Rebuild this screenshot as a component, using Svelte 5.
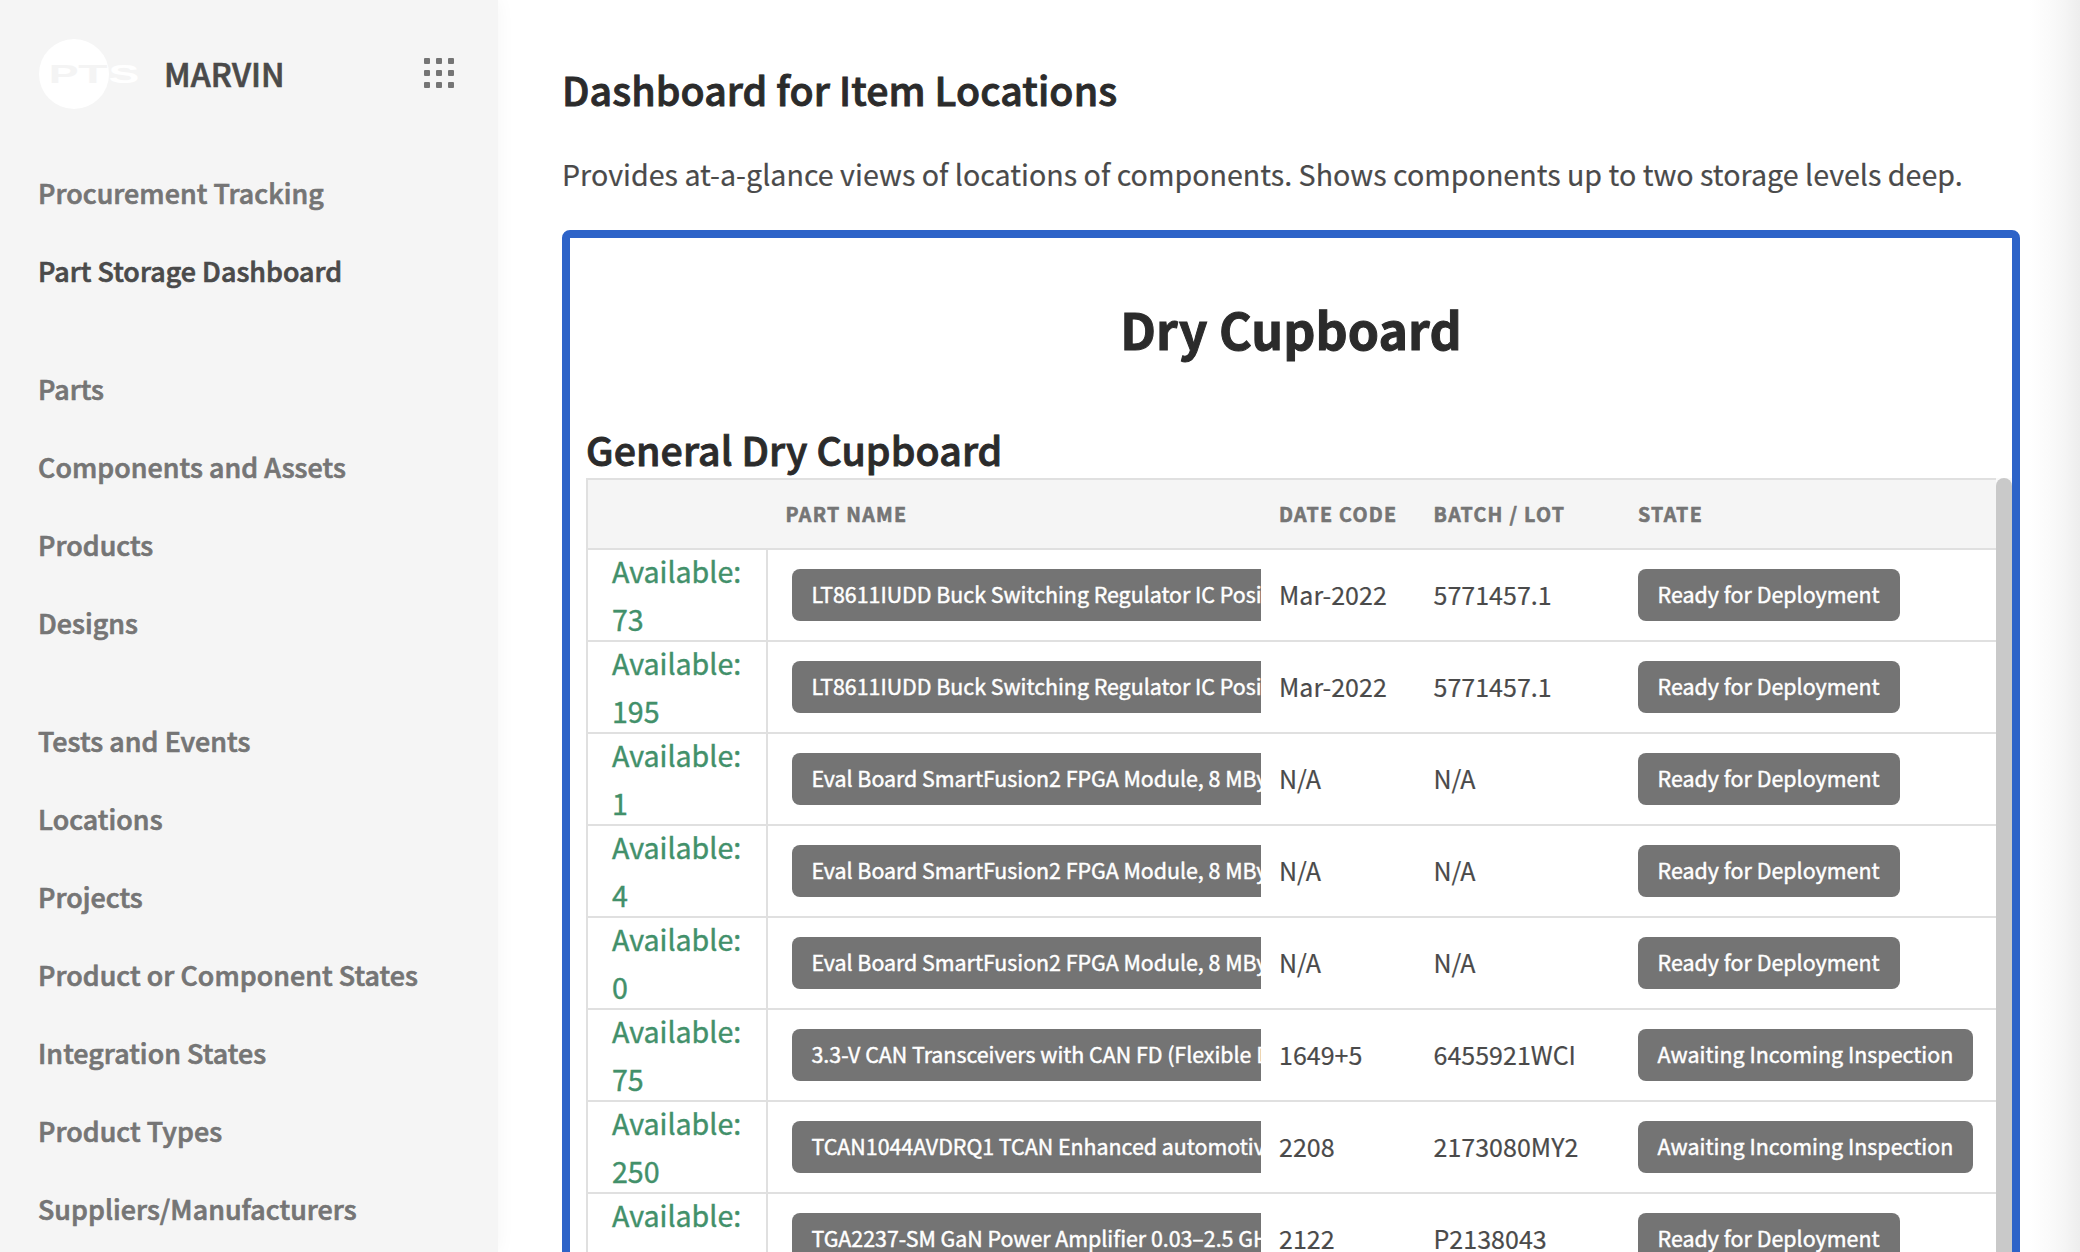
<script>
  const groups = [
    ['Procurement Tracking', 'Part Storage Dashboard'],
    ['Parts', 'Components and Assets', 'Products', 'Designs'],
    [
      'Tests and Events',
      'Locations',
      'Projects',
      'Product or Component States',
      'Integration States',
      'Product Types',
      'Suppliers/Manufacturers'
    ]
  ];
  const active = 'Part Storage Dashboard';

  const ready = 'Ready for Deployment';
  const awaiting = 'Awaiting Incoming Inspection';
  const buck = 'LT8611IUDD Buck Switching Regulator IC Posi';
  const evalBoard = 'Eval Board SmartFusion2 FPGA Module, 8 MBy';

  const rows = [
    { count: 73, part: buck, date: 'Mar-2022', lot: '5771457.1', status: ready },
    { count: 195, part: buck, date: 'Mar-2022', lot: '5771457.1', status: ready },
    { count: 1, part: evalBoard, date: 'N/A', lot: 'N/A', status: ready },
    { count: 4, part: evalBoard, date: 'N/A', lot: 'N/A', status: ready },
    { count: 0, part: evalBoard, date: 'N/A', lot: 'N/A', status: ready },
    { count: 75, part: '3.3-V CAN Transceivers with CAN FD (Flexible D', date: '1649+5', lot: '6455921WCI', status: awaiting },
    { count: 250, part: 'TCAN1044AVDRQ1 TCAN Enhanced automotiv', date: '2208', lot: '2173080MY2', status: awaiting },
    { count: 12, part: 'TGA2237-SM GaN Power Amplifier 0.03–2.5 GH', date: '2122', lot: 'P2138043', status: ready }
  ];
</script>

<div class="app">
  <aside class="sidebar">
    <header class="brand">
      <svg class="logo" viewBox="0 0 104 72" width="104" height="72" aria-label="PTS">
        <circle cx="36" cy="36" r="35" fill="#fff" />
        <g font-family="Liberation Sans, sans-serif" font-size="26" font-weight="700">
          <text transform="translate(10.8 45) scale(1.72 1)" fill="#f4f4f4">P</text>
          <text transform="translate(40.2 45) scale(1.84 1)" fill="#f4f4f4">T</text>
          <text transform="translate(70.6 45) scale(1.78 1)" fill="#fff">S</text>
        </g>
      </svg>
      <span class="name">MARVIN</span>
      <svg class="apps" viewBox="0 0 30 30" width="30" height="30" fill="#757575">
        {#each [0, 12, 24] as y}
          {#each [0, 12, 24] as x}
            <rect {x} {y} width="6" height="6" rx="1" />
          {/each}
        {/each}
      </svg>
    </header>
    <nav>
      {#each groups as group}
        <ul>
          {#each group as item}
            <li class:active={item === active}>{item}</li>
          {/each}
        </ul>
      {/each}
    </nav>
  </aside>

  <main>
    <h1>Dashboard for Item Locations</h1>
    <p class="intro">Provides at-a-glance views of locations of components. Shows components up to two storage levels deep.</p>

    <section class="panel">
      <h2>Dry Cupboard</h2>
      <h3>General Dry Cupboard</h3>
      <div class="scroller">
        <div class="table">
          <div class="row head">
            <span></span>
            <span class="part-head">Part name</span>
            <span>Date code</span>
            <span>Batch / lot</span>
            <span>State</span>
          </div>
          {#each rows as row}
            <div class="row">
              <div class="available"><span>Available:</span><span>{row.count}</span></div>
              <div class="part"><span class="pill">{row.part}</span></div>
              <span class="value">{row.date}</span>
              <span class="value">{row.lot}</span>
              <div><span class="pill">{row.status}</span></div>
            </div>
          {/each}
        </div>
        <div class="track"><div class="thumb"></div></div>
      </div>
    </section>
  </main>
  <div class="edge"></div>
</div>

<style>
  :global(body) {
    margin: 0;
    overflow: hidden;
  }
  .app {
    display: flex;
    width: 2080px;
    height: 1252px;
    overflow: hidden;
    background: #fff;
    color: #4a4a4a;
    font-family: 'Noto Sans CJK JP', 'Noto Sans', sans-serif;
  }
  .sidebar {
    flex: none;
    box-sizing: border-box;
    width: 498px;
    padding: 38px 42px 0 38px;
    background: #f5f5f5;
    box-shadow: 0 0 18px rgba(0, 0, 0, 0.045);
  }
  .brand {
    display: flex;
    align-items: center;
    height: 72px;
  }
  .name {
    flex: 1;
    margin-left: 22px;
    padding-bottom: 3px;
    font-size: 32.1px;
    font-weight: 500;
    line-height: 48px;
    letter-spacing: 0.1px;
    -webkit-text-stroke: 0.7px;
  }
  .apps {
    margin: -2px 2px 0 0;
  }
  nav {
    display: flex;
    flex-direction: column;
    gap: 40px;
    padding-top: 44px;
  }
  ul {
    margin: 0;
    padding: 0;
    list-style: none;
  }
  li {
    height: 78px;
    color: #757575;
    font-size: 26.8px;
    font-weight: 500;
    line-height: 78px;
    letter-spacing: 0.07px;
    white-space: nowrap;
    -webkit-text-stroke: 0.7px;
  }
  li.active {
    color: #4a4a4a;
  }
  main {
    flex: none;
    width: 1458px;
    padding: 61px 0 0 64px;
  }
  h1,
  h2,
  h3,
  p {
    margin: 0;
    white-space: nowrap;
  }
  h1,
  h3 {
    color: #2b2b2b;
    font-size: 39.3px;
    font-weight: 500;
    line-height: 56px;
    letter-spacing: 0.09px;
    -webkit-text-stroke: 0.9px;
  }
  .intro {
    margin-top: 33px;
    font-size: 28.6px;
    line-height: 48px;
    letter-spacing: 0.02px;
    -webkit-text-stroke: 0.2px;
  }
  .panel {
    box-sizing: border-box;
    height: 1100px;
    margin-top: 32px;
    padding: 54px 0 0 16px;
    border: 8px solid #2d63c8;
    border-radius: 8px;
  }
  h2 {
    margin-left: -16px;
    color: #2b2b2b;
    font-size: 50px;
    font-weight: 700;
    line-height: 72px;
    letter-spacing: 0.1px;
    text-align: center;
    -webkit-text-stroke: 1px;
  }
  h3 {
    margin: 57px 0 1px;
  }
  .scroller {
    display: flex;
  }
  .table {
    flex: 1;
    box-sizing: border-box;
    border-top: 2px solid #e0e0e0;
    border-left: 2px solid #e0e0e0;
  }
  .row {
    display: grid;
    grid-template-columns: 180px 511px 154.5px 204.5px 1fr;
    align-items: center;
    box-sizing: border-box;
    height: 92px;
    border-bottom: 2px solid #e0e0e0;
    font-size: 25px;
    line-height: 40px;
    white-space: nowrap;
  }
  .value {
    padding-bottom: 2px;
    letter-spacing: 0.03px;
    -webkit-text-stroke: 0.2px;
  }
  .head {
    height: 70px;
    background: #f5f5f5;
    color: #757575;
    font-size: 19.6px;
    font-weight: 700;
    line-height: 28px;
    letter-spacing: 1.3px;
    text-transform: uppercase;
    -webkit-text-stroke: 0.6px;
  }
  .part-head {
    padding-left: 17.5px;
  }
  .available {
    display: flex;
    flex-direction: column;
    justify-content: center;
    box-sizing: border-box;
    height: 90px;
    padding-left: 24px;
    border-right: 2px solid #e0e0e0;
    color: #42906a;
    font-size: 28.6px;
    line-height: 48px;
    -webkit-text-stroke: 0.4px;
  }
  .part {
    margin: 0 18px 0 24px;
    overflow: hidden;
  }
  .pill {
    display: block;
    width: max-content;
    height: 52px;
    padding: 0 20px 0 19.5px;
    border-radius: 8px;
    background: #747474;
    color: #fff;
    font-size: 21.4px;
    line-height: 50px;
    letter-spacing: 0.03px;
    -webkit-text-stroke: 0.45px;
  }
  .part .pill {
    box-sizing: border-box;
    min-width: 520px;
    letter-spacing: -0.02px;
  }
  .track {
    flex: none;
    width: 16px;
    background: #fafafa;
  }
  .thumb {
    height: 900px;
    border-radius: 8px;
    background: #c9c9c9;
  }
  .edge {
    flex: 1;
    background: linear-gradient(to right, #fff 15%, #fafafa 50%, #f5f5f5 75%, #ededed);
  }
</style>
